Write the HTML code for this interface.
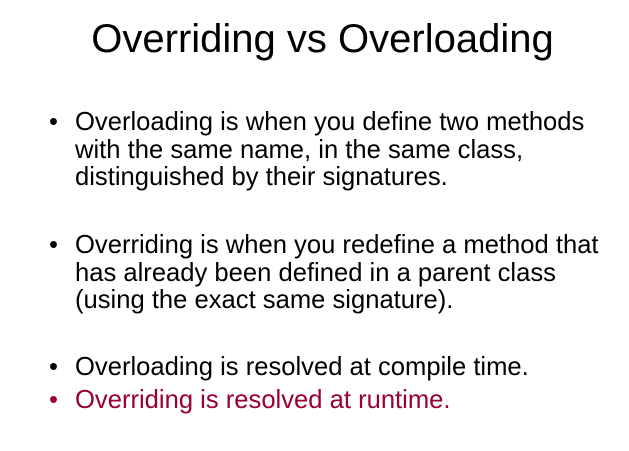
<!DOCTYPE html>
<html><head><style>
body{margin:0;width:629px;height:451px;background:#fff;position:relative;overflow:hidden;font-family:"Liberation Sans",Arial,sans-serif;color:#000}
.t{position:absolute;left:8px;width:629px;text-align:center;top:16px;font-size:40px;line-height:46px}
.l{position:absolute;left:75px;font-size:25.6px;line-height:28px;white-space:nowrap}
.b{position:absolute;left:49px;font-size:25.6px;line-height:28px}
.r{color:#990033}
</style></head><body>
<div class="t">Overriding vs Overloading</div>
<div class="b" style="top:108px">•</div>
<div class="l" style="top:108px">Overloading is when you define two methods</div>
<div class="l" style="top:136px">with the same name, in the same class,</div>
<div class="l" style="top:163px">distinguished by their signatures.</div>
<div class="b" style="top:231px">•</div>
<div class="l" style="top:231px">Overriding is when you redefine a method that</div>
<div class="l" style="top:259px">has already been defined in a parent class</div>
<div class="l" style="top:286px">(using the exact same signature).</div>
<div class="b" style="top:353px">•</div>
<div class="l" style="top:353px">Overloading is resolved at compile time.</div>
<div class="b r" style="top:386px">•</div>
<div class="l r" style="top:386px">Overriding is resolved at runtime.</div>
</body></html>
